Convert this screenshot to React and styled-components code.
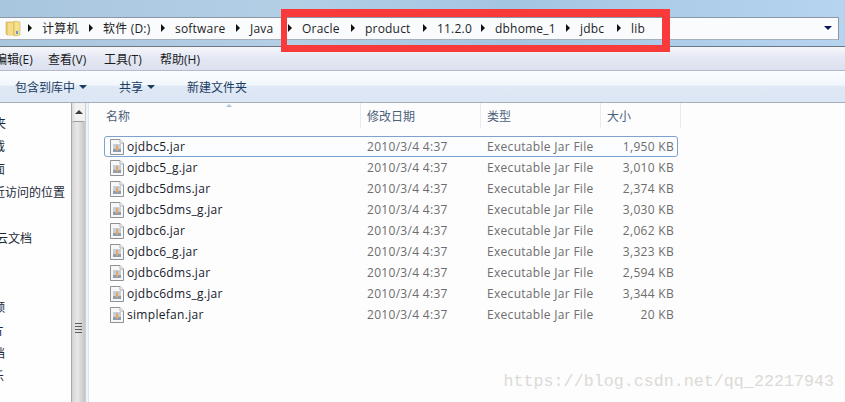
import React from "react";
import styled, { createGlobalStyle } from "styled-components";

const crumbs = [
  { name: "计算机", w: 61 },
  { name: "软件 (D:)", w: 72 },
  { name: "software", w: 75 },
  { name: "Java", w: 52 },
  { name: "Oracle", w: 63 },
  { name: "product", w: 72 },
  { name: "11.2.0", w: 58 },
  { name: "dbhome_1", w: 85 },
  { name: "jdbc", w: 51 },
  { name: "lib", w: 40 },
];

const navItems = [
  { name: "夹", end: 6 },
  { name: "载", end: 5 },
  { name: "面", end: 5 },
  { name: "近访问的位置", end: 65 },
  { name: "", end: 0 },
  { name: "云文档", end: 32 },
  { name: "", end: 0 },
  { name: "", end: 0 },
  { name: "频", end: 5 },
  { name: "片", end: 4 },
  { name: "档", end: 5 },
  { name: "乐", end: 4 },
];

const files = [
  { name: "ojdbc5.jar", size: "1,950 KB", selected: true },
  { name: "ojdbc5_g.jar", size: "3,010 KB" },
  { name: "ojdbc5dms.jar", size: "2,374 KB" },
  { name: "ojdbc5dms_g.jar", size: "3,030 KB" },
  { name: "ojdbc6.jar", size: "2,062 KB" },
  { name: "ojdbc6_g.jar", size: "3,323 KB" },
  { name: "ojdbc6dms.jar", size: "2,594 KB" },
  { name: "ojdbc6dms_g.jar", size: "3,344 KB" },
  { name: "simplefan.jar", size: "20 KB" },
];

const FolderIcon = () => (
  <svg width="16" height="17" viewBox="0 0 16 17">
    <path d="M1 2h8l1 1v12H2l-1-1z" fill="#e9cd6c" stroke="#c9a94e" strokeWidth="0.6" />
    <path d="M9 1l6 1v13l-6 1z" fill="#f6e08c" stroke="#cdae55" strokeWidth="0.6" />
    <path d="M3 3h5v12H3z" fill="#f4dc8a" />
    <rect x="11" y="11" width="2" height="3" fill="#5b9bd5" />
  </svg>
);

const JarIcon = () => (
  <svg width="14" height="16" viewBox="0 0 14 16">
    <path d="M0.5 0.5h9.5l3.5 3.5v11.5H0.5z" fill="#f7f7f7" stroke="#8e9296" />
    <path d="M10 0.5v3.5h3.5" fill="#fff" stroke="#a8acb0" />
    <rect x="3" y="5" width="8" height="8" fill="#c5cfda" />
    <rect x="3" y="10" width="8" height="3" fill="#8e9eae" />
    <path d="M6 6h2v3.500h1.200L7 12 4.800 9.500H6z" fill="#e8a76a" />
  </svg>
);

export default function App() {
  return (
    <>
      <GlobalStyle />
      <Page>
        <Sky>
          <AddressBar>
            <FolderSlot>
              <FolderIcon />
            </FolderSlot>
            {crumbs.map((c) => (
              <Crumb key={c.name} $w={c.w}>
                <Arrow />
                <CrumbName>{c.name}</CrumbName>
              </Crumb>
            ))}
            <DropSlot>
              <DropArrow />
            </DropSlot>
          </AddressBar>
        </Sky>
        <MenuBar>
          <MenuItem $w={53}>编辑(E)</MenuItem>
          <MenuItem $w={56}>查看(V)</MenuItem>
          <MenuItem $w={56}>工具(T)</MenuItem>
          <MenuItem>帮助(H)</MenuItem>
        </MenuBar>
        <ToolBar>
          <ToolButton $w={104}>
            包含到库中 <ToolCaret />
          </ToolButton>
          <ToolButton $w={68}>
            共享 <ToolCaret />
          </ToolButton>
          <ToolButton>新建文件夹</ToolButton>
        </ToolBar>
        <Body>
          <NavPane>
            <NavList>
              {navItems.map((n, i) => (
                <NavItem key={i} $end={n.end}>
                  {n.name}
                </NavItem>
              ))}
            </NavList>
          </NavPane>
          <ScrollBar>
            <ScrollUp />
            <ScrollThumb>
              <Grip />
              <Grip />
              <Grip />
              <Grip />
            </ScrollThumb>
          </ScrollBar>
          <Divider />
          <Main>
            <HeaderRow>
              <HeadCell $w={257} $pad={2}>
                <SortMark />
                名称
              </HeadCell>
              <HeadCell $w={120}>修改日期</HeadCell>
              <HeadCell $w={120}>类型</HeadCell>
              <HeadCell $w={80}>大小</HeadCell>
            </HeaderRow>
            <Rows>
              {files.map((f) => (
                <Row key={f.name} $selected={f.selected}>
                  <NameCell>
                    <JarIcon />
                    <FileName>{f.name}</FileName>
                  </NameCell>
                  <InfoCell>2010/3/4 4:37</InfoCell>
                  <InfoCell>Executable Jar File</InfoCell>
                  <SizeCell>{f.size}</SizeCell>
                </Row>
              ))}
            </Rows>
          </Main>
        </Body>
        <RedBox />
        <Watermark>https://blog.csdn.net/qq_22217943</Watermark>
      </Page>
    </>
  );
}

const GlobalStyle = createGlobalStyle`
  html, body {
    margin: 0;
    padding: 0;
    background: #fdfdfe;
  }
  body {
    font-family: "Open Sans", "Noto Sans CJK SC", sans-serif;
    font-size: 12px;
  }
`;

const Page = styled.div`
  position: relative;
  width: 845px;
  height: 402px;
  overflow: hidden;
  display: flex;
  flex-direction: column;
  background: #fdfdfe;
`;

const Sky = styled.div`
  height: 47px;
  box-sizing: border-box;
  padding-top: 17px;
  background: linear-gradient(90deg, #a9c6df 0%, #b3cfe6 35%, #a4c5e2 60%, #b6d4f0 100%);
  border-bottom: 1px solid #6e7680;
`;

const AddressBar = styled.div`
  height: 23px;
  margin-right: 6px;
  padding-bottom: 1px;
  display: flex;
  align-items: center;
  box-sizing: border-box;
  background: #f9fbfd;
  border-top: 1px solid #8a97a5;
  border-bottom: 1px solid #a5b0bc;
  border-right: 1px solid #8a97a5;
`;

const FolderSlot = styled.div`
  width: 28px;
  display: flex;
  justify-content: center;
  flex: none;
  padding-right: 3px;
  box-sizing: border-box;
`;

const Crumb = styled.div`
  width: ${(p) => p.$w}px;
  flex: none;
  display: flex;
  align-items: center;
`;

const Arrow = styled.span`
  flex: none;
  width: 0;
  height: 0;
  margin-right: 10px;
  border-left: 4px solid #111;
  border-top: 4px solid transparent;
  border-bottom: 4px solid transparent;
`;

const CrumbName = styled.span`
  color: #1e1e1e;
  font-size: 12px;
  letter-spacing: 0.2px;
  white-space: nowrap;
`;

const DropSlot = styled.div`
  margin-left: auto;
  width: 15px;
  display: flex;
  justify-content: center;
  margin-right: 3px;
`;

const DropArrow = styled.span`
  width: 0;
  height: 0;
  border-top: 4px solid #0b1460;
  border-left: 4px solid transparent;
  border-right: 4px solid transparent;
`;

const MenuBar = styled.div`
  height: 24px;
  box-sizing: border-box;
  display: flex;
  align-items: center;
  margin-left: -5px;
  background: linear-gradient(180deg, #f6f7fb 0%, #e3e7f3 50%, #dde2f0 100%);
  border-bottom: 1px solid #b4bacb;
`;

const MenuItem = styled.span`
  width: ${(p) => (p.$w ? `${p.$w}px` : "auto")};
  flex: none;
  color: #1b1b1b;
  font-size: 12px;
`;

const ToolBar = styled.div`
  height: 32px;
  box-sizing: border-box;
  display: flex;
  align-items: center;
  padding-left: 15px;
  color: #1c3d63;
  font-size: 12px;
  background: linear-gradient(180deg, #fbfdff 0%, #f2f7fd 45%, #dfe8f5 50%, #dce6f4 100%);
  border-bottom: 1px solid #a4adb8;
`;

const ToolButton = styled.div`
  width: ${(p) => (p.$w ? `${p.$w}px` : "auto")};
  flex: none;
  display: flex;
  align-items: center;
  gap: 4px;
  white-space: nowrap;
`;

const ToolCaret = styled.span`
  width: 0;
  height: 0;
  border-top: 4px solid #1c3d63;
  border-left: 4px solid transparent;
  border-right: 4px solid transparent;
`;

const Body = styled.div`
  flex: 1;
  display: flex;
  min-height: 0;
`;

const NavPane = styled.div`
  width: 71px;
  flex: none;
  overflow: hidden;
  background: #fefefe;
`;

const NavList = styled.div`
  padding-top: 9px;
  display: flex;
  flex-direction: column;
`;

const NavItem = styled.div`
  height: 23px;
  line-height: 23px;
  font-size: 12px;
  color: #1c2a38;
  white-space: nowrap;
  display: flex;
  justify-content: flex-end;
  width: ${(p) => p.$end}px;
`;

const ScrollBar = styled.div`
  width: 15px;
  flex: none;
  box-sizing: border-box;
  background: linear-gradient(90deg, #dcdcdc, #f2f2f2 30%, #f2f2f2);
  border-left: 1px solid #a9a9a9;
  border-right: 1px solid #c9ced4;
  display: flex;
  flex-direction: column;
  align-items: center;
`;

const ScrollUp = styled.span`
  flex: none;
  width: 0;
  height: 0;
  margin: 7px 0 5px;
  border-bottom: 4px solid #3c3c3c;
  border-left: 4px solid transparent;
  border-right: 4px solid transparent;
`;

const ScrollThumb = styled.div`
  flex: 1;
  width: 100%;
  box-sizing: border-box;
  margin-top: 2px;
  background: linear-gradient(90deg, #d2d2d2, #e8e8e8 40%, #c4c4c4);
  border-top: 1px solid #9d9d9d;
  border-radius: 2px 2px 0 0;
  display: flex;
  flex-direction: column;
  align-items: center;
  gap: 2px;
  padding-top: 201px;
`;

const Grip = styled.span`
  width: 7px;
  height: 1px;
  background: #5c5c5c;
`;

const Divider = styled.div`
  width: 2px;
  flex: none;
  background: #eef3f9;
  border-right: 1px solid #dbe4ee;
`;

const Main = styled.div`
  flex: 1;
  min-width: 0;
  padding-left: 15px;
  background: #fdfdfe;
`;

const HeaderRow = styled.div`
  height: 25px;
  display: flex;
  margin-bottom: 8px;
`;

const HeadCell = styled.div`
  position: relative;
  width: ${(p) => p.$w}px;
  flex: none;
  box-sizing: border-box;
  padding-left: ${(p) => p.$pad ?? 6}px;
  display: flex;
  align-items: center;
  color: #4c607a;
  font-size: 12px;
  border-right: 1px solid #e4ebf3;
`;

const SortMark = styled.span`
  position: absolute;
  left: 122px;
  top: 1px;
  width: 0;
  height: 0;
  border-bottom: 3px solid #a9c4dc;
  border-left: 3px solid transparent;
  border-right: 3px solid transparent;
`;

const Rows = styled.div`
  display: flex;
  flex-direction: column;
`;

const Row = styled.div`
  width: 574px;
  height: 21px;
  box-sizing: border-box;
  display: flex;
  align-items: center;
  letter-spacing: 0.3px;
  border: 1px solid ${(p) => (p.$selected ? "#7da2ce" : "transparent")};
  border-radius: 3px;
  background: ${(p) => (p.$selected ? "#fcfdff" : "transparent")};
`;

const NameCell = styled.div`
  width: 262px;
  flex: none;
  display: flex;
  align-items: center;
  box-sizing: border-box;
  padding-left: 5px;
  gap: 3px;
`;

const FileName = styled.span`
  color: #17212c;
  font-size: 12px;
`;

const InfoCell = styled.div`
  width: 120px;
  flex: none;
  color: #6d6d6d;
  font-size: 12px;
`;

const SizeCell = styled.div`
  flex: 1;
  text-align: right;
  padding-right: 3px;
  color: #6d6d6d;
  font-size: 12px;
`;

const RedBox = styled.div`
  position: absolute;
  left: 281px;
  top: 9px;
  width: 389px;
  height: 43px;
  box-sizing: border-box;
  border-style: solid;
  border-color: #f93a3a;
  border-width: 8px 8px 7px 6px;
`;

const Watermark = styled.div`
  position: absolute;
  right: 11px;
  top: 372px;
  font-family: "Liberation Mono", monospace;
  font-size: 16.7px;
  color: #dcdad5;
  white-space: nowrap;
`;
